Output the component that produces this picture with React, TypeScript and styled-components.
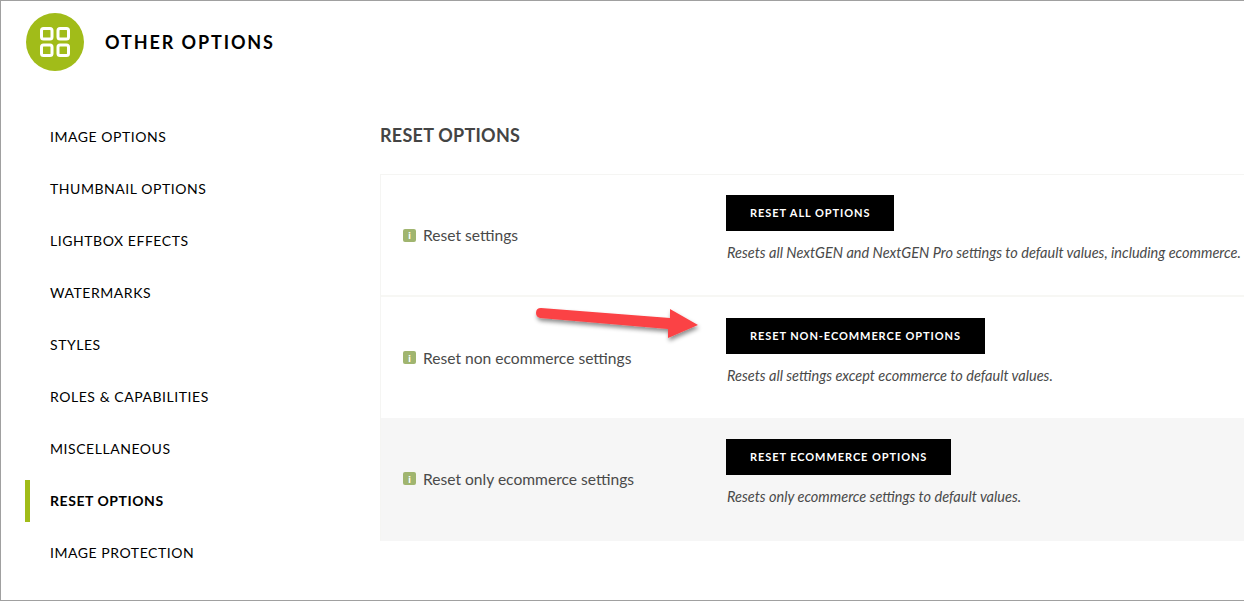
import React from "react";
import styled, { createGlobalStyle } from "styled-components";

const GlobalStyle = createGlobalStyle`
  html, body {
    margin: 0;
    padding: 0;
    background: #fff;
    font-family: Lato, "Open Sans", sans-serif;
  }
`;

const navItems = [
  "Image Options",
  "Thumbnail Options",
  "Lightbox Effects",
  "Watermarks",
  "Styles",
  "Roles & Capabilities",
  "Miscellaneous",
  "Reset Options",
  "Image Protection",
];

const rows = [
  {
    label: "Reset settings",
    button: "Reset all options",
    note: "Resets all NextGEN and NextGEN Pro settings to default values, including ecommerce.",
    height: 122,
    inset: 20,
  },
  {
    label: "Reset non ecommerce settings",
    button: "Reset non-ecommerce options",
    note: "Resets all settings except ecommerce to default values.",
    height: 121,
    inset: 21,
  },
  {
    label: "Reset only ecommerce settings",
    button: "Reset ecommerce options",
    note: "Resets only ecommerce settings to default values.",
    height: 123,
    inset: 21,
    shaded: true,
  },
];

const App = () => (
  <>
    <GlobalStyle />
    <Frame>
      <Header>
        <Badge>
          <svg width="30" height="30" viewBox="0 0 30 30" fill="none" stroke="#fff" strokeWidth="3">
            <rect x="1.5" y="1.5" width="10.500" height="10.500" rx="2" />
            <rect x="18" y="1.5" width="10.500" height="10.500" rx="2" />
            <rect x="1.5" y="18" width="10.500" height="10.500" rx="2" />
            <rect x="18" y="18" width="10.500" height="10.500" rx="2" />
          </svg>
        </Badge>
        <Title>Other Options</Title>
      </Header>
      <Body>
        <Sidebar>
          {navItems.map((item) => (
            <NavItem key={item} $active={item === "Reset Options"}>
              {item}
            </NavItem>
          ))}
        </Sidebar>
        <Main>
          <SectionTitle>Reset Options</SectionTitle>
          <Table>
            {rows.map((row) => (
              <Row key={row.label} $shaded={row.shaded} $height={row.height}>
                <Label>
                  <InfoIcon>i</InfoIcon>
                  {row.label}
                </Label>
                <Action $inset={row.inset}>
                  <ActionButton>{row.button}</ActionButton>
                  <Note>{row.note}</Note>
                </Action>
              </Row>
            ))}
          </Table>
        </Main>
      </Body>
      <Arrow width="170" height="50" viewBox="0 0 170 50">
        <defs>
          <filter id="arrowShadow" x="-10%" y="-30%" width="120%" height="170%">
            <feDropShadow dx="1" dy="3" stdDeviation="2" floodColor="#000" floodOpacity="0.45" />
          </filter>
        </defs>
        <path
          d="M11 8 L140 18 L140 9 L168 25 L138 38 L138 29 L10 18 Q6 17 6 13 Q6 8 11 8 Z"
          fill="#fb4245"
          filter="url(#arrowShadow)"
        />
      </Arrow>
    </Frame>
  </>
);

const Frame = styled.div`
  position: relative;
  box-sizing: border-box;
  width: 1244px;
  height: 601px;
  overflow: hidden;
  border: 1px solid #a0a0a0;
  border-right: none;
  background: #fff;
`;

const Header = styled.header`
  display: flex;
  align-items: center;
  gap: 21px;
  padding: 12px 0 0 25px;
`;

const Badge = styled.div`
  display: flex;
  align-items: center;
  justify-content: center;
  width: 58px;
  height: 58px;
  border-radius: 50%;
  background: #a1bc19;
`;

const Title = styled.h1`
  margin: 0;
  color: #000;
  font-size: 18px;
  font-weight: 700;
  letter-spacing: 1.9px;
  text-transform: uppercase;
`;

const Body = styled.div`
  display: flex;
  padding-top: 45px;
`;

const Sidebar = styled.nav`
  display: flex;
  flex-direction: column;
  gap: 10px;
  width: 379px;
  padding-left: 24px;
  box-sizing: border-box;
`;

const NavItem = styled.div<{ $active?: boolean }>`
  display: flex;
  align-items: center;
  box-sizing: border-box;
  height: 42px;
  padding-bottom: 2px;
  padding-left: ${(p) => (p.$active ? "20px" : "25px")};
  border-left: ${(p) => (p.$active ? "5px solid #a1bc19" : "none")};
  color: #000;
  font-size: 14px;
  font-weight: ${(p) => (p.$active ? 700 : 400)};
  letter-spacing: 0.55px;
  text-transform: uppercase;
`;

const Main = styled.main`
  flex: 1;
  min-width: 0;
  padding-top: 8px;
`;

const SectionTitle = styled.h2`
  margin: 0 0 28px;
  color: #444;
  font-size: 18px;
  font-weight: 700;
  letter-spacing: 0.25px;
  line-height: 22px;
  text-transform: uppercase;
`;

const Table = styled.div`
  display: flex;
  flex-direction: column;
  border-top: 1px solid #f5f5f3;
  border-left: 1px solid #f5f5f3;
`;

const Row = styled.div<{ $shaded?: boolean; $height: number }>`
  display: flex;
  align-items: flex-start;
  box-sizing: border-box;
  height: ${(p) => p.$height}px;
  padding-left: 22px;
  background: ${(p) => (p.$shaded ? "#f6f6f6" : "#fff")};
  border-bottom: 2px solid ${(p) => (p.$shaded ? "#f6f6f6" : "#f7f7f4")};
  &:nth-child(2) {
    border-bottom: none;
  }
`;

const Label = styled.div`
  display: flex;
  align-self: center;
  align-items: center;
  gap: 7px;
  width: 323px;
  color: #4a4a4a;
  font-size: 15.6px;
`;

const InfoIcon = styled.span`
  display: flex;
  align-items: center;
  justify-content: center;
  width: 13px;
  height: 13px;
  border-radius: 2px;
  background: #a0b56f;
  color: #fff;
  font-size: 10px;
  font-weight: 900;
`;

const Action = styled.div<{ $inset: number }>`
  display: flex;
  flex-direction: column;
  align-items: flex-start;
  gap: 13px;
  margin-top: ${(p) => p.$inset}px;
  white-space: nowrap;
`;

const ActionButton = styled.button`
  height: 36px;
  padding: 0 24px 2px;
  border: none;
  background: #000;
  color: #fff;
  font-family: inherit;
  font-size: 11px;
  font-weight: 700;
  letter-spacing: 0.92px;
  text-transform: uppercase;
`;

const Note = styled.div`
  padding-left: 1px;
  color: #4a4a4a;
  font-size: 14.5px;
  font-style: italic;
  line-height: 18px;
`;

const Arrow = styled.svg`
  position: absolute;
  left: 529px;
  top: 299px;
  overflow: visible;
`;

export default App;
